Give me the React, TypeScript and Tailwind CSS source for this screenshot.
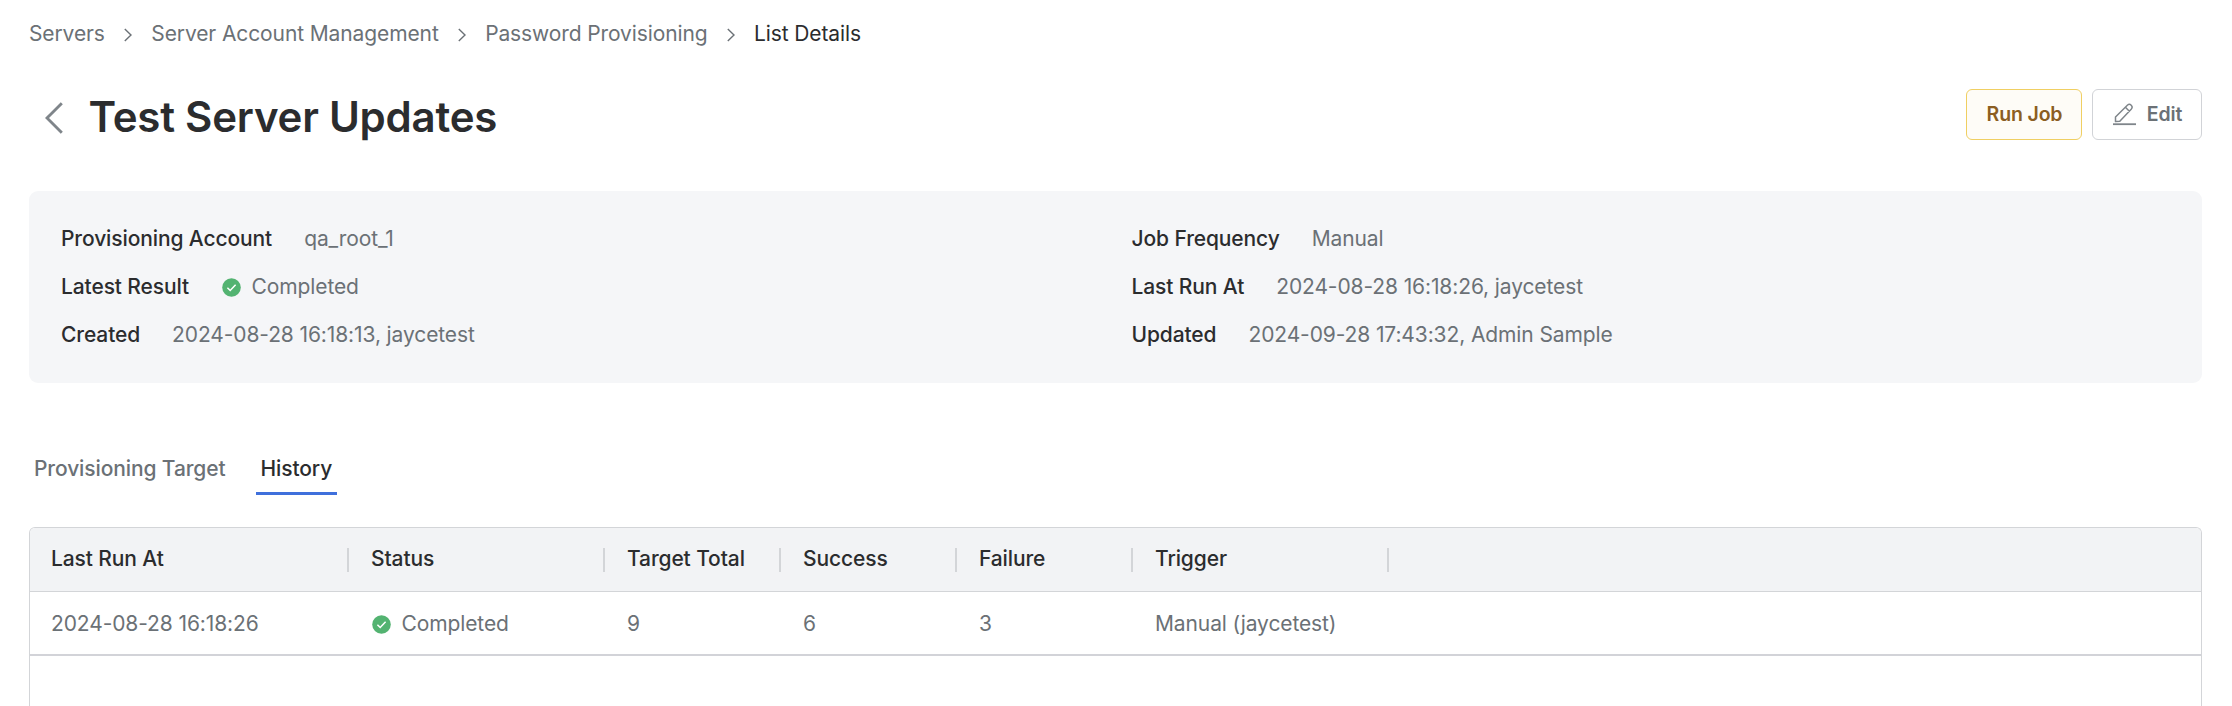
import { Fragment, type ReactNode } from "react";

const crumbs = ["Servers", "Server Account Management", "Password Provisioning", "List Details"];

function CheckBadge() {
  return (
    <svg width="19" height="19" viewBox="0 0 19 19" fill="none" className="mt-px ml-px shrink-0">
      <circle cx="9.5" cy="9.5" r="9.3" fill="#53b371" />
      <path d="M5.4 9.7 8.2 12.5 13.6 6.7" stroke="#fff" strokeWidth="1.5" />
    </svg>
  );
}

function Completed() {
  return (
    <span className="flex items-center gap-[10.5px]">
      <CheckBadge />
      <span>Completed</span>
    </span>
  );
}

function Field({ label, children }: { label: string; children: ReactNode }) {
  return (
    <div className="flex h-12 items-center gap-8">
      <dt className="font-medium text-[#2b2c2e]">{label}</dt>
      <dd>{children}</dd>
    </div>
  );
}

function HeadCell({ children }: { children: ReactNode }) {
  return (
    <div className="flex items-center justify-between pr-px pl-[21px]">
      <span className="pb-0.5">{children}</span>
      <span className="h-6 w-0.5 bg-[#d3d5d8]" />
    </div>
  );
}

export default function App() {
  return (
    <div className="flex h-[706px] w-full flex-col overflow-hidden bg-white pr-[30px] pl-[29px] font-['Inter',sans-serif] text-[21px] leading-[30px] tracking-[-0.11px] text-[#6b7176]">
      <nav className="flex h-[68px] items-center">
        {crumbs.map((crumb, i) => (
          <Fragment key={crumb}>
            {i > 0 && (
              <svg width="8" height="14" viewBox="0 0 8 14" fill="none" className="mx-[19.25px] mt-0.5">
                <path d="M0.8 1 7 7 0.8 13" stroke="#6b7176" strokeWidth="1.4" />
              </svg>
            )}
            <span className={i === crumbs.length - 1 ? "text-[#2b2c2e]" : ""}>{crumb}</span>
          </Fragment>
        ))}
      </nav>

      <header className="flex h-[123px] items-start justify-between">
        <div className="flex h-[98px] items-center pl-4">
          <svg width="18" height="32" viewBox="0 0 18 32" fill="none" className="mt-px">
            <path d="M16.8 1.2 2 16 16.8 30.8" stroke="#7f858a" strokeWidth="2.9" />
          </svg>
          <h1 className="pl-[25.5px] text-[42px] leading-[50px] font-semibold tracking-[-0.23px] text-[#2b2c2e]">
            Test Server Updates
          </h1>
        </div>
        <div className="flex gap-2.5 pt-[21px] text-[19.5px] font-semibold tracking-[-0.15px]">
          <button className="flex h-[51px] w-[116px] items-center justify-center rounded-md border border-[#f0cf62] bg-[#fefcf7] pb-0.5 pl-px text-[#8b5e22]">
            Run Job
          </button>
          <button className="flex h-[51px] w-[110px] items-center justify-center gap-[11px] rounded-md border border-[#d1d3d7] bg-white pb-0.5 pl-px">
            <svg width="23" height="23" viewBox="0 0 23 23" fill="none" stroke="#7f858a" className="mt-px">
              <path
                d="M2.5 18.6V14L14.6 2q1.8-1.5 3.6.2t.2 3.7L6.8 18.2Z M12.4 4.3l4.2 4.2"
                strokeWidth="1.5"
                strokeLinejoin="round"
              />
              <path d="M0 21.2h23" strokeWidth="1.8" />
            </svg>
            Edit
          </button>
        </div>
      </header>

      <dl className="grid h-48 shrink-0 grid-cols-2 gap-x-8 rounded-[9px] bg-[#f5f6f8] px-8 py-6">
        <Field label="Provisioning Account">qa_root_1</Field>
        <Field label="Job Frequency">Manual</Field>
        <Field label="Latest Result"><Completed /></Field>
        <Field label="Last Run At">2024-08-28 16:18:26, jaycetest</Field>
        <Field label="Created">2024-08-28 16:18:13, jaycetest</Field>
        <Field label="Updated">2024-09-28 17:43:32, Admin Sample</Field>
      </dl>

      <div className="mt-[71px] flex h-[41px] shrink-0 gap-[25px] font-medium">
        <button className="flex px-[5px]">Provisioning Target</button>
        <button className="flex border-b-3 border-[#3f70dc] px-[5px] text-[#2b2c2e]">History</button>
      </div>

      <div className="mt-8 flex flex-1 flex-col overflow-hidden rounded-t-md border border-b-0 border-[#d3d5d8]">
        <div className="grid h-16 grid-cols-[320px_256px_176px_176px_176px_256px_1fr] border-b border-[#d3d5d8] bg-[#f2f3f5] font-medium text-[#2b2c2e]">
          <HeadCell>Last Run At</HeadCell>
          <HeadCell>Status</HeadCell>
          <HeadCell>Target Total</HeadCell>
          <HeadCell>Success</HeadCell>
          <HeadCell>Failure</HeadCell>
          <HeadCell>Trigger</HeadCell>
        </div>
        <div className="grid h-16 grid-cols-[320px_256px_176px_176px_176px_256px_1fr] items-center border-b-2 border-[#d2d3d8] pt-0.5 *:pl-[21px]">
          <div>2024-08-28 16:18:26</div>
          <div><Completed /></div>
          <div>9</div>
          <div>6</div>
          <div>3</div>
          <div>Manual (jaycetest)</div>
        </div>
      </div>
    </div>
  );
}
